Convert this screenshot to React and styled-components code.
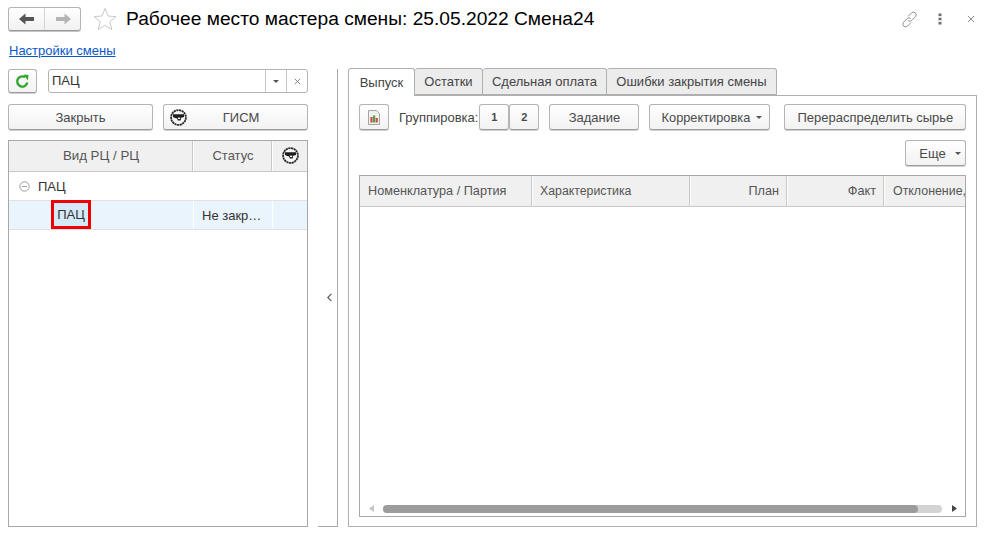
import React from "react";
import styled, { createGlobalStyle } from "styled-components";

const Global = createGlobalStyle`
  html, body { margin: 0; padding: 0; background: #fff; }
  body { font-family: "Liberation Sans", Arial, sans-serif; font-size: 13px; color: #333; }
  #root { width: 990px; height: 536px; overflow: hidden; }
  * { box-sizing: border-box; }
`;

const Page = styled.div`
  width: 990px;
  height: 536px;
  display: flex;
  flex-direction: column;
  padding: 7px 13px 9px 8px;
`;
const TitleBar = styled.div`
  height: 24px;
  display: flex;
  align-items: center;
`;
const NavGroup = styled.div`
  display: flex;
  width: 73px;
  height: 24px;
  border: 1px solid #b4b4b4;
  border-bottom-color: #9a9a9a;
  border-radius: 3px;
  background: linear-gradient(#fff, #f1f1f1);
  box-shadow: 0 1px 0 #c4c4c4;
`;
const NavBtn = styled.div`
  flex: 1;
  display: flex;
  align-items: center;
  justify-content: center;
  & + & { border-left: 1px solid #d4d4d4; }
`;
const StarWrap = styled.div`
  margin-left: 11px;
  width: 25px;
  height: 24px;
  display: flex;
  align-items: center;
  justify-content: center;
`;
const Title = styled.h1`
  margin: 0 0 0 9px;
  font-size: 19.2px;
  font-weight: 400;
  color: #000;
  white-space: nowrap;
  flex: 1;
`;
const WinTools = styled.div`
  display: flex;
  align-items: center;
  margin-right: 2px;
`;
const ToolSlot = styled.span`
  display: flex;
  margin-left: ${p => p.$gap || 0}px;
`;
const LinkRow = styled.div`
  height: 38px;
  padding: 12px 0 0 1px;
`;
const Link = styled.a`
  color: #0b57c9;
  text-decoration: underline;
  font-size: 13px;
`;
const Body = styled.div`
  flex: 1;
  display: grid;
  grid-template-columns: 300px 40px 629px;
  min-height: 0;
`;
const LeftPanel = styled.div`
  display: flex;
  flex-direction: column;
`;
const FilterRow = styled.div`
  display: flex;
  height: 24px;
  gap: 11px;
`;
const Btn = styled.button`
  font: inherit;
  font-size: ${p => p.$fs || 13}px;
  font-weight: ${p => p.$bold ? 700 : 400};
  color: #4a4a4a;
  width: ${p => p.$w}px;
  flex: none;
  height: ${p => p.$h || 26}px;
  margin-left: ${p => p.$ml || 0}px;
  padding: 0 0 0 ${p => p.$pl || 0}px;
  border: 1px solid #b4b4b4;
  border-bottom-color: #9c9c9c;
  border-radius: 3px;
  background: linear-gradient(#fff, #f2f2f2);
  box-shadow: 0 1px 0 #d0d0d0;
  display: flex;
  align-items: center;
  justify-content: center;
  gap: ${p => p.$gap || 6}px;
  white-space: nowrap;
`;
const Combo = styled.div`
  flex: 1;
  display: flex;
  height: 24px;
  border: 1px solid #b4b4b4;
  border-radius: 3px;
  background: #fff;
`;
const ComboValue = styled.div`
  flex: 1;
  padding: 0 3px;
  line-height: 22px;
  font-size: 13px;
  color: #333;
`;
const ComboBtn = styled.div`
  width: 21px;
  border-left: 1px solid #c4c4c4;
  display: flex;
  align-items: center;
  justify-content: center;
  color: #666;
`;
const ActionRow = styled.div`
  display: flex;
  gap: 10px;
  margin-top: 11px;
`;
const GismBtn = styled(Btn)`
  position: relative;
  padding-left: 11px;
  & > svg { position: absolute; left: 6px; top: 4px; }
`;
const TreeTable = styled.div`
  flex: 1;
  margin-top: 10px;
  border: 1px solid #a8a8a8;
  display: flex;
  flex-direction: column;
  min-height: 0;
`;
const HeaderRow = styled.div`
  display: grid;
  grid-template-columns: ${p => p.$cols};
  height: 31px;
  background: #f0f0f0;
  border-bottom: 1px solid #c8c8c8;
  flex: none;
`;
const HeadCell = styled.div`
  display: flex;
  align-items: center;
  justify-content: ${p => p.$align || "center"};
  padding: 0 ${p => p.$pr ?? 8}px 1px ${p => p.$pl ?? 8}px;
  font-size: ${p => p.$fs || 13}px;
  color: #555;
  white-space: nowrap;
  overflow: hidden;
  & + & { border-left: 1px solid #fff; box-shadow: -1px 0 0 #c8c8c8; }
`;
const GroupRow = styled.div`
  height: 29px;
  display: flex;
  align-items: center;
  padding-left: 10px;
  gap: 8px;
  font-size: 13px;
  color: #333;
  border-bottom: 1px solid #e2e2e2;
`;
const DataRow = styled.div`
  display: grid;
  grid-template-columns: 184px 79px 1fr;
  height: 29px;
  background: #eaf4fc;
  border-bottom: 1px solid #e0e0e0;
`;
const DataCell = styled.div`
  display: flex;
  align-items: center;
  padding: 0 8px;
  font-size: 13px;
  color: #333;
  white-space: nowrap;
  & + & { border-left: 1px solid #fff; }
`;
const Marked = styled.span`
  margin-left: 34px;
  width: 40px;
  height: 29px;
  border: 3px solid #ee0000;
  background: #d6e9f8;
  display: flex;
  align-items: center;
  justify-content: center;
  margin-top: -1px;
`;
const Splitter = styled.div`
  display: flex;
  align-items: flex-end;
  justify-content: flex-end;
`;
const SplitLine = styled.div`
  width: 20px;
  height: 100%;
  margin-right: 10px;
  border-right: 1px solid #a8a8a8;
  border-bottom: 1px solid #a8a8a8;
  display: flex;
  align-items: center;
  justify-content: flex-end;
  padding: 0 5px 0 0;
`;
const RightPanel = styled.div`
  display: flex;
  flex-direction: column;
  min-height: 0;
`;
const Tabs = styled.div`
  display: flex;
  height: 27px;
  flex: none;
  margin-top: -1px;
  position: relative;
  z-index: 1;
`;
const Tab = styled.div`
  width: ${p => p.$w}px;
  height: ${p => p.$active ? 28 : 27}px;
  display: flex;
  align-items: center;
  justify-content: center;
  font-size: 13px;
  color: #444;
  background: ${p => p.$active ? "#fff" : "#ececec"};
  border: 1px solid #b0b0b0;
  border-bottom: ${p => p.$active ? "none" : "1px solid #b0b0b0"};
  border-left: ${p => p.$first ? "1px solid #b0b0b0" : "none"};
  border-radius: 3px 3px 0 0;
`;
const TabBody = styled.div`
  flex: 1;
  border: 1px solid #b0b0b0;
  padding: 8px 10px 9px;
  display: flex;
  flex-direction: column;
  min-height: 0;
`;
const Toolbar = styled.div`
  display: flex;
  align-items: center;
  height: 26px;
`;
const ToolLabel = styled.span`
  margin: 0 1px 0 10px;
  font-size: 13px;
  color: #444;
  white-space: nowrap;
`;
const MoreRow = styled.div`
  display: flex;
  justify-content: flex-end;
  margin-top: 10px;
`;
const Grid = styled.div`
  flex: 1;
  margin-top: 9px;
  border: 1px solid #a8a8a8;
  display: flex;
  flex-direction: column;
  min-height: 0;
  overflow: hidden;
`;
const GridBody = styled.div`
  flex: 1;
`;
const Scroll = styled.div`
  height: 13px;
  display: flex;
  align-items: center;
  padding: 0 8px 2px 9px;
`;
const Track = styled.div`
  flex: 1;
  height: 8px;
  margin: 0 10px 0 9px;
  border-radius: 4px;
  background: #d4d4d4;
  display: flex;
`;
const Thumb = styled.div`
  width: 535px;
  height: 8px;
  border-radius: 4px;
  background: #9c9c9c;
`;
const Caret = styled.span`
  display: inline-block;
  width: 0;
  height: 0;
  border-left: 3px solid transparent;
  border-right: 3px solid transparent;
  border-top: 3px solid #555;
`;

const Arrow = ({ color, flip }) => (
  <svg width="16" height="12" viewBox="0 0 16 12" style={flip ? { transform: "scaleX(-1)" } : undefined}>
    <path d="M0 6 L6.5 0.5 V4 H15 V8 H6.5 V11.5 Z" fill={color} />
  </svg>
);
const Star = () => (
  <svg width="24" height="24" viewBox="0 0 24 24">
    <path d="M12 1.5 L15 9 L23 9.6 L16.8 14.6 L18.8 22.6 L12 18.3 L5.2 22.6 L7.2 14.6 L1 9.6 L9 9 Z" fill="#fff" stroke="#c9c9c9" strokeWidth="1" />
  </svg>
);
const Gear = () => (
  <svg width="17" height="17" viewBox="0 0 17 17">
    <circle cx="8.5" cy="8.5" r="7.4" fill="#f6f6f6" stroke="#2c2c2c" strokeWidth="1.8" strokeDasharray="2.2 0.5" />
    <path d="M3 5.2 H14 V8 L11.2 8.8 L10.6 11.6 H7.8 L7.2 9.4 L5 9 L3 8 Z" fill="#1e1e1e" />
    <path d="M8 8.6 H10.2 V10 H8 Z" fill="#fff" />
  </svg>
);
const Refresh = () => (
  <svg width="15" height="15" viewBox="0 0 15 15">
    <path d="M12.3 8.6 A5.1 5.1 0 1 1 10 3.2" fill="none" stroke="#2ea52e" strokeWidth="2.4" />
    <path d="M8.6 0.4 L13.6 1 L12.8 6.4 Z" fill="#2ea52e" />
  </svg>
);
const ReportIcon = () => (
  <svg width="14" height="15" viewBox="0 0 14 15">
    <path d="M1.5 .5 H9.5 L12.5 3.5 V14.5 H1.5 Z" fill="#f0f0f0" stroke="#a4a4a4" />
    <rect x="3.4" y="7" width="2.2" height="5.5" fill="#c8503c" />
    <rect x="6" y="5.5" width="2.2" height="7" fill="#4ea24e" />
    <rect x="8.6" y="8" width="2.2" height="4.5" fill="#c8503c" />
  </svg>
);
const LinkIcon = () => (
  <svg width="17" height="17" viewBox="0 0 17 17" fill="none" stroke="#8f8f8f" strokeWidth="1">
    <path d="M7 5.4 L10.4 2 a2.7 2.7 0 0 1 4 3.8 L10.8 9.4 a2.7 2.7 0 0 1 -3.6 .2" />
    <path d="M10 11.6 L6.6 15 a2.7 2.7 0 0 1 -4 -3.8 L6.2 7.6 a2.7 2.7 0 0 1 3.6 -.2" />
  </svg>
);
const Dots = () => (
  <svg width="4" height="12" viewBox="0 0 4 12" fill="#707070">
    <rect x="0.5" y="0.5" width="3" height="2.6" />
    <rect x="0.5" y="4.7" width="3" height="2.6" />
    <rect x="0.5" y="8.9" width="3" height="2.6" />
  </svg>
);
const Cross = ({ size = 8, color = "#808080" }) => (
  <svg width={size} height={size} viewBox="0 0 9 9" stroke={color} strokeWidth="1" fill="none">
    <path d="M1 1 L8 8 M8 1 L1 8" />
  </svg>
);
const Minus = () => (
  <svg width="11" height="11" viewBox="0 0 11 11" fill="none" stroke="#9c9c9c">
    <circle cx="5.5" cy="5.5" r="4.7" />
    <path d="M3 5.5 H8" />
  </svg>
);
const Chevron = () => (
  <svg width="5" height="9" viewBox="0 0 5 9" fill="none" stroke="#555" strokeWidth="1.1">
    <path d="M4.4 .8 L.8 4.5 L4.4 8.2" />
  </svg>
);
const ScrollArrow = ({ color, flip }) => (
  <svg width="5" height="7" viewBox="0 0 5 7" style={flip ? { transform: "scaleX(-1)" } : undefined}>
    <path d="M0 0 L5 3.5 L0 7 Z" fill={color} />
  </svg>
);

export default function App() {
  return (
    <Page>
      <Global />
      <TitleBar>
        <NavGroup>
          <NavBtn><Arrow color="#555" /></NavBtn>
          <NavBtn><Arrow color="#b4b4b4" flip /></NavBtn>
        </NavGroup>
        <StarWrap><Star /></StarWrap>
        <Title>Рабочее место мастера смены: 25.05.2022 Смена24</Title>
        <WinTools>
          <ToolSlot><LinkIcon /></ToolSlot>
          <ToolSlot $gap={20}><Dots /></ToolSlot>
          <ToolSlot $gap={25}><Cross /></ToolSlot>
        </WinTools>
      </TitleBar>
      <LinkRow><Link href="#">Настройки смены</Link></LinkRow>
      <Body>
        <LeftPanel>
          <FilterRow>
            <Btn $w={29} $h={24}><Refresh /></Btn>
            <Combo>
              <ComboValue>ПАЦ</ComboValue>
              <ComboBtn><Caret /></ComboBtn>
              <ComboBtn><Cross size={7} color="#666" /></ComboBtn>
            </Combo>
          </FilterRow>
          <ActionRow>
            <Btn $w={145}>Закрыть</Btn>
            <GismBtn $w={145}><Gear />ГИСМ</GismBtn>
          </ActionRow>
          <TreeTable>
            <HeaderRow $cols="184px 79px 1fr">
              <HeadCell $fs={13.3}>Вид РЦ / РЦ</HeadCell>
              <HeadCell>Статус</HeadCell>
              <HeadCell><Gear /></HeadCell>
            </HeaderRow>
            <GroupRow><Minus />ПАЦ</GroupRow>
            <DataRow>
              <DataCell><Marked>ПАЦ</Marked></DataCell>
              <DataCell>Не закр…</DataCell>
              <DataCell />
            </DataRow>
          </TreeTable>
        </LeftPanel>
        <Splitter>
          <SplitLine><Chevron /></SplitLine>
        </Splitter>
        <RightPanel>
          <Tabs>
            <Tab $w={67} $active $first>Выпуск</Tab>
            <Tab $w={68}>Остатки</Tab>
            <Tab $w={124}>Сдельная оплата</Tab>
            <Tab $w={170}>Ошибки закрытия смены</Tab>
          </Tabs>
          <TabBody>
            <Toolbar>
              <Btn $w={30}><ReportIcon /></Btn>
              <ToolLabel>Группировка:</ToolLabel>
              <Btn $w={30} $fs={11} $bold>1</Btn>
              <Btn $w={30} $fs={11} $bold>2</Btn>
              <Btn $w={90} $ml={10}>Задание</Btn>
              <Btn $w={121} $ml={10} $pl={4} $fs={12.8}>Корректировка <Caret /></Btn>
              <Btn $w={182} $ml={14}>Перераспределить сырье</Btn>
            </Toolbar>
            <MoreRow>
              <Btn $w={61} $pl={9} $gap={9}>Еще <Caret /></Btn>
            </MoreRow>
            <Grid>
              <HeaderRow $cols="172px 158px 97px 97px 1fr">
                <HeadCell $align="flex-start" $fs={12.7}>Номенклатура / Партия</HeadCell>
                <HeadCell $align="flex-start" $fs={12.3} $pl={7}>Характеристика</HeadCell>
                <HeadCell $align="flex-end" $fs={12.7}>План</HeadCell>
                <HeadCell $align="flex-end" $fs={12.7}>Факт</HeadCell>
                <HeadCell $align="flex-start" $fs={12.4} $pr={0}>Отклонение,</HeadCell>
              </HeaderRow>
              <GridBody />
              <Scroll>
                <ScrollArrow color="#c4c4c4" flip />
                <Track><Thumb /></Track>
                <ScrollArrow color="#444" />
              </Scroll>
            </Grid>
          </TabBody>
        </RightPanel>
      </Body>
    </Page>
  );
}
